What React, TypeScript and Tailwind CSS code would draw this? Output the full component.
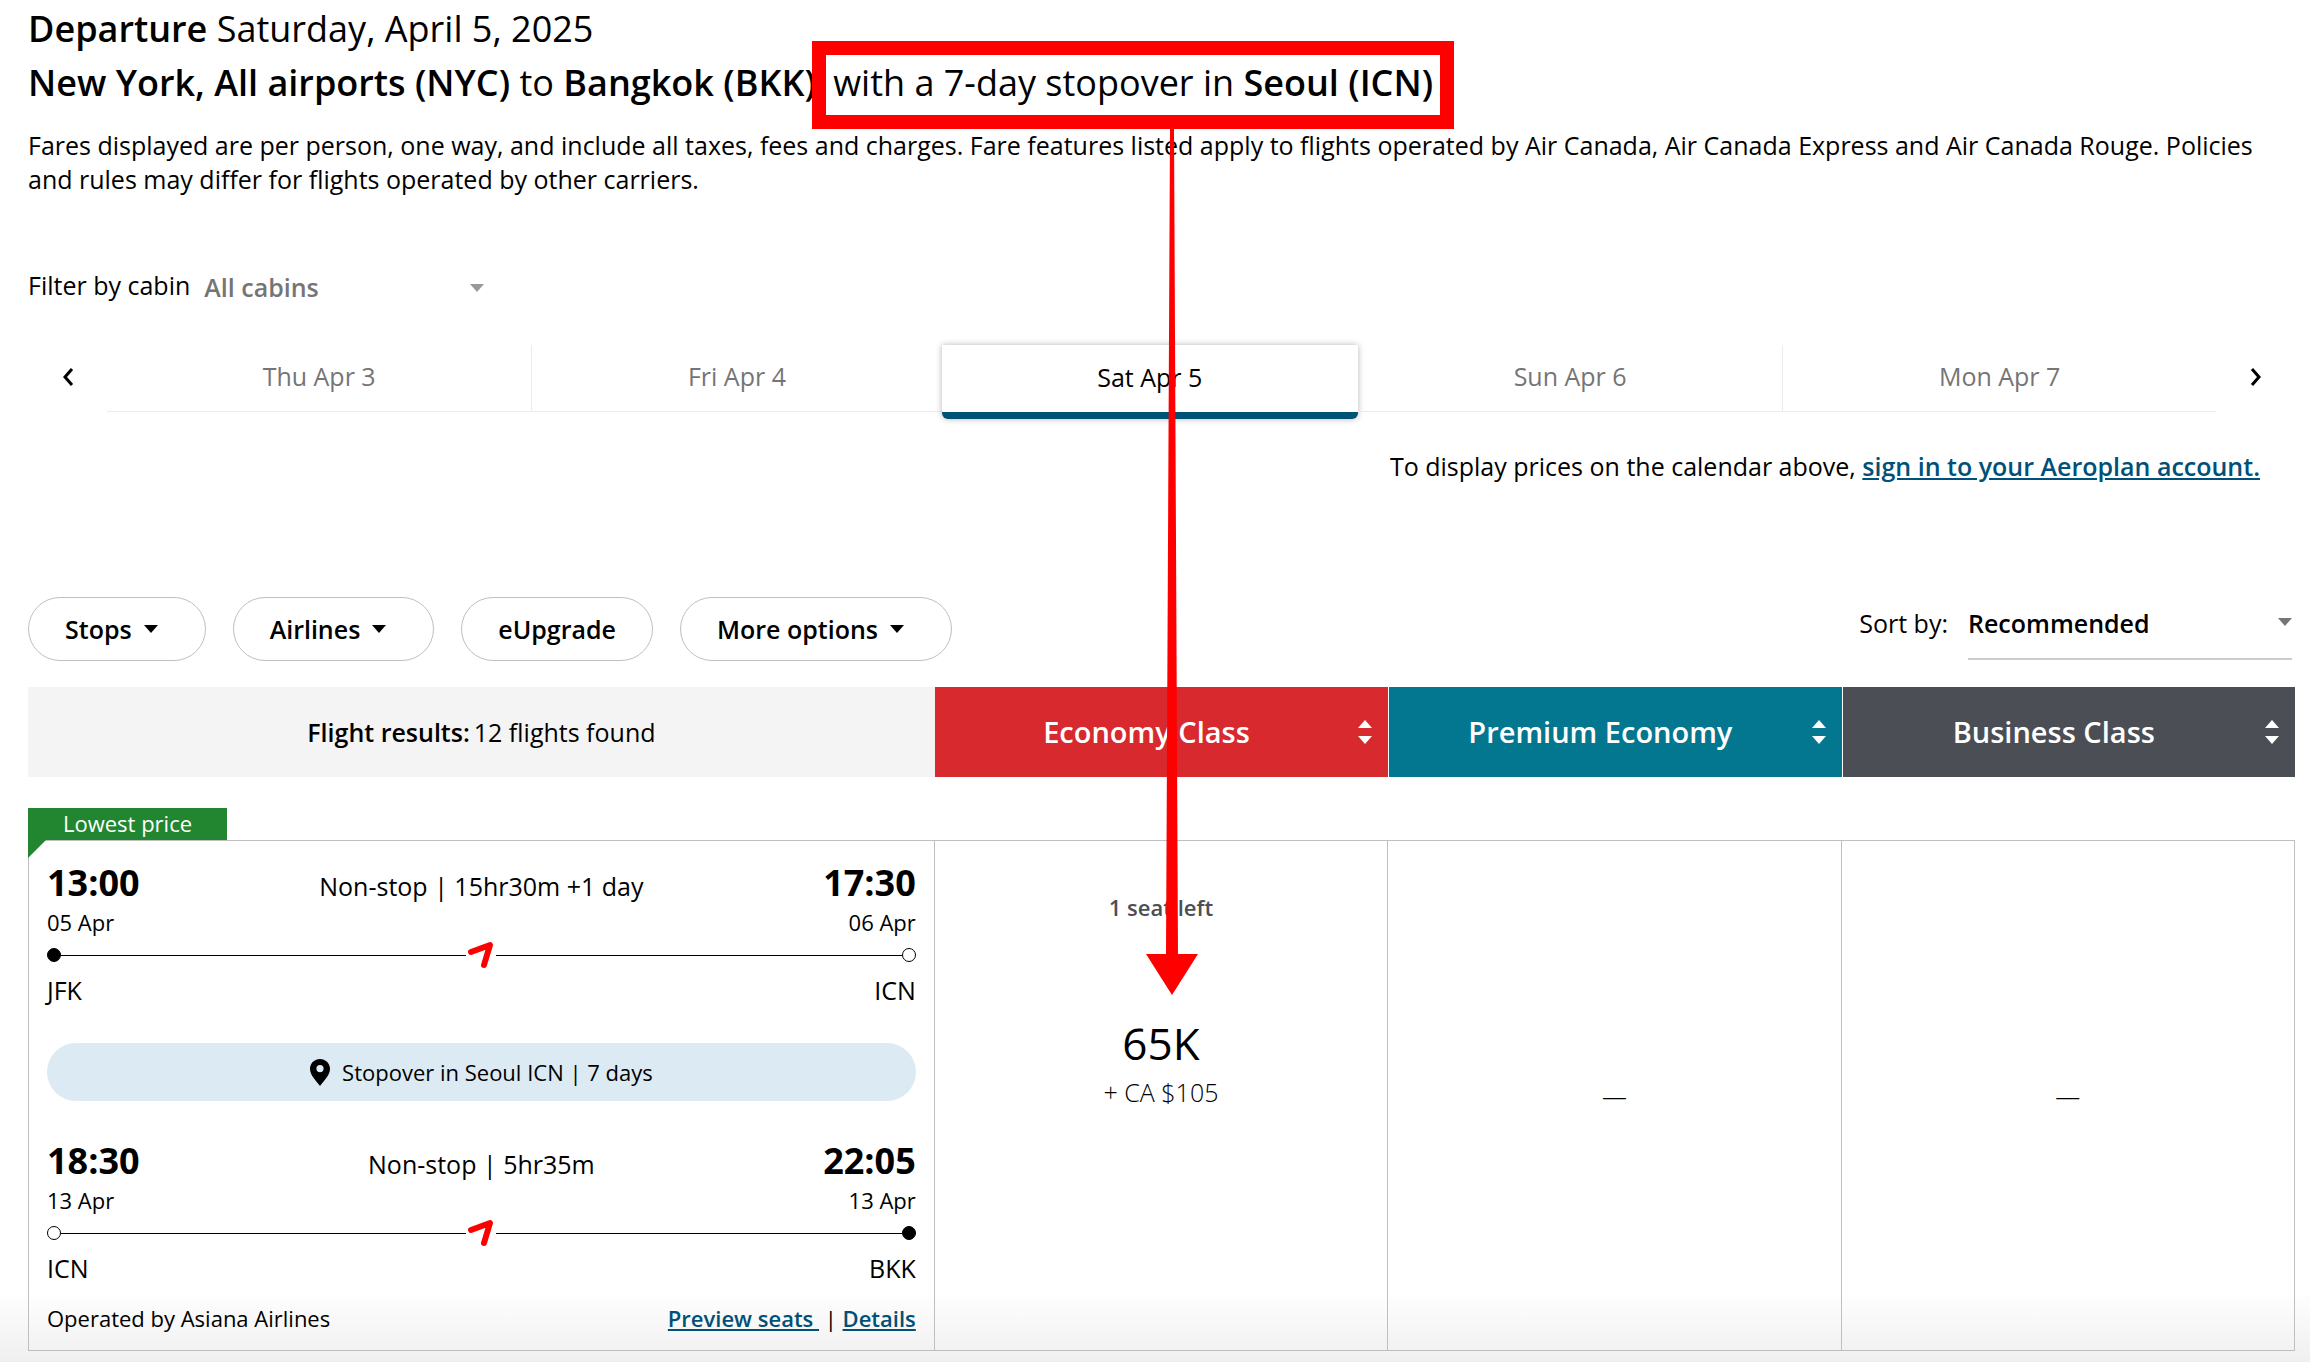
import { useState } from 'react';
import { clsx } from 'clsx';

interface Leg {
    departTime: string;
    departDate: string;
    from: string;
    arriveTime: string;
    arriveDate: string;
    to: string;
    summary: string;
}

interface CabinColumn {
    name: string;
    headerClass: string;
}

const days = ['Thu Apr 3', 'Fri Apr 4', 'Sat Apr 5', 'Sun Apr 6', 'Mon Apr 7'];

const filters = [
    { label: 'Stops', menu: true },
    { label: 'Airlines', menu: true },
    { label: 'eUpgrade', menu: false },
    { label: 'More options', menu: true },
];

const cabins: CabinColumn[] = [
    { name: 'Economy Class', headerClass: 'bg-[#d8292f]' },
    { name: 'Premium Economy', headerClass: 'bg-[#03778f]' },
    { name: 'Business Class', headerClass: 'bg-[#4b4f55]' },
];

const legs: Leg[] = [
    {
        departTime: '13:00',
        departDate: '05 Apr',
        from: 'JFK',
        arriveTime: '17:30',
        arriveDate: '06 Apr',
        to: 'ICN',
        summary: 'Non-stop | 15hr30m +1 day',
    },
    {
        departTime: '18:30',
        departDate: '13 Apr',
        from: 'ICN',
        arriveTime: '22:05',
        arriveDate: '13 Apr',
        to: 'BKK',
        summary: 'Non-stop | 5hr35m',
    },
];

const Caret = ({ className }: { className?: string }) => (
    <svg viewBox="0 0 14 8" className={clsx('h-2 w-3.5 fill-current', className)} aria-hidden="true">
        <path d="M0 0h14L7 8z" />
    </svg>
);

const SortArrows = () => (
    <svg viewBox="0 0 14 24" className="h-6 w-3.5 fill-white" aria-hidden="true">
        <path d="M7 0l7 8H0zM0 16h14l-7 8z" />
    </svg>
);

const Chevron = ({ flip }: { flip?: boolean }) => (
    <svg
        viewBox="0 0 12 18"
        className={clsx('h-[18px] w-3 fill-none stroke-black stroke-3', flip && 'rotate-180')}
        aria-hidden="true"
    >
        <path d="M10 1L3 9l7 8" />
    </svg>
);

const Dot = ({ filled }: { filled: boolean }) => (
    <span className={clsx('size-3.5 rounded-full border border-black', filled && 'bg-black')} />
);

const FlightLeg = ({ leg, startFilled, endFilled }: { leg: Leg; startFilled: boolean; endFilled: boolean }) => (
    <div>
        <div className="flex items-baseline justify-between text-[36px] leading-[48px]">
            <span className="font-bold">{leg.departTime}</span>
            <span className="text-[25px] leading-[34px]">{leg.summary}</span>
            <span className="font-bold">{leg.arriveTime}</span>
        </div>
        <div className="flex justify-between text-[22px] leading-[30px]">
            <span>{leg.departDate}</span>
            <span>{leg.arriveDate}</span>
        </div>
        <div className="my-[11px] flex h-3.5 items-center">
            <Dot filled={startFilled} />
            <span className="h-px flex-1 bg-black" />
            <svg viewBox="0 0 30 28" className="-my-2 h-7 w-[30px] fill-none stroke-[#ff0000]" aria-hidden="true">
                <path d="M5 11L24 4L18 24" strokeWidth="6" strokeLinecap="round" strokeLinejoin="round" />
            </svg>
            <span className="h-px flex-1 bg-black" />
            <Dot filled={endFilled} />
        </div>
        <div className="flex justify-between text-[25px] leading-[34px]">
            <span>{leg.from}</span>
            <span>{leg.to}</span>
        </div>
    </div>
);

const App = () => {
    const [selectedDay, setSelectedDay] = useState('Sat Apr 5');

    return (
        <main className="min-h-screen bg-[linear-gradient(to_top,#efefef,#ffffff_72px)] pt-0.5 pr-[15px] pb-3 pl-7 font-['Open_Sans',sans-serif] text-[25px] leading-[34px] text-black">
            <h1 className="text-[36px] leading-[54px]">
                <strong className="font-semibold">Departure</strong> Saturday, April 5, 2025
                <br />
                <strong className="font-semibold">New York, All airports (NYC)</strong> to{' '}
                <strong className="font-semibold">Bangkok (BKK)</strong>{' '}
                {/* callout round the stopover, with its arrow down to the price */}
                <span className="relative ml-2 inline-block">
                    with a 7-day stopover in <strong className="font-semibold">Seoul (ICN)</strong>
                    <span className="absolute -inset-x-[21px] -top-[15px] h-[88px] border-[14px] border-[#ff0000]" />
                    <svg
                        viewBox="0 0 52 866"
                        className="absolute top-[73px] left-[313px] z-10 h-[866px] w-[52px] fill-[#ff0000]"
                        aria-hidden="true"
                    >
                        <path d="M24 0h4l4 825h20L26 866L0 825h20z" />
                    </svg>
                </span>
            </h1>
            <p className="mt-[18px]">
                Fares displayed are per person, one way, and include all taxes, fees and charges. Fare features listed
                apply to flights operated by Air Canada, Air Canada Express and Air Canada Rouge. Policies and rules may
                differ for flights operated by other carriers.
            </p>

            <div className="mt-[72px] flex items-start gap-3.5">
                <label htmlFor="cabin">Filter by cabin</label>
                <div className="relative w-[284px] pt-0.5 text-[#757575]">
                    <select id="cabin" className="block w-full appearance-none bg-transparent font-semibold">
                        <option>All cabins</option>
                        <option>Economy Class</option>
                        <option>Premium Economy</option>
                        <option>Business Class</option>
                    </select>
                    <Caret className="pointer-events-none absolute top-4 right-1 text-[#999999]" />
                </div>
            </div>

            <div className="mt-[41px] flex items-start">
                <button aria-label="Previous days" className="flex h-16 w-[79px] items-center justify-center">
                    <Chevron />
                </button>
                <div className="flex flex-1 items-start">
                    {days.map((day, index) => (
                        <button
                            key={day}
                            onClick={() => setSelectedDay(day)}
                            className={clsx(
                                'flex-auto pb-1',
                                day === selectedDay
                                    ? 'h-[74px] rounded-b-md border-b-[7px] border-[#005274] bg-white shadow-[0_0_6px_rgba(0,0,0,0.3)]'
                                    : 'h-[67px] border-b border-[#ebebeb] text-[#757575]',
                                (index === 0 || index === 3) && 'border-r',
                            )}
                        >
                            {day}
                        </button>
                    ))}
                </div>
                <button aria-label="Next days" className="flex h-16 w-[79px] items-center justify-center">
                    <Chevron flip />
                </button>
            </div>

            <p className="mt-[30px] mr-[35px] text-right">
                To display prices on the calendar above,{' '}
                <a href="#sign-in" className="font-semibold text-[#005078] underline">
                    sign in to your Aeroplan account.
                </a>
            </p>

            <div className="mt-[114px] flex items-start justify-between">
                <div className="flex gap-[27px]">
                    {filters.map((filter) => (
                        <button
                            key={filter.label}
                            className="flex h-16 items-center gap-3 rounded-full border border-[#bfbfbf] px-9 font-semibold"
                        >
                            {filter.label}
                            {filter.menu && <Caret className="mr-[11px]" />}
                        </button>
                    ))}
                </div>
                <div className="mr-[3px] flex items-start gap-5 pt-[9px]">
                    <label htmlFor="sort">Sort by:</label>
                    <div className="relative w-[324px] border-b-2 border-[#cccccc] pb-[18px]">
                        <select id="sort" className="block w-full appearance-none bg-transparent font-semibold">
                            <option>Recommended</option>
                            <option>Departure time</option>
                            <option>Duration</option>
                        </select>
                        <Caret className="pointer-events-none absolute top-3 right-0 text-[#757575]" />
                    </div>
                </div>
            </div>

            <table className="mt-[26px] w-full table-fixed border-separate border-spacing-0">
                <colgroup>
                    <col className="w-2/5" />
                    <col className="w-1/5" />
                    <col className="w-1/5" />
                    <col className="w-1/5" />
                </colgroup>
                <thead>
                    <tr className="h-[90px]">
                        <th scope="col" className="bg-[#f4f4f4] p-0 text-center font-normal">
                            <span className="mr-1 font-semibold">Flight results:</span>12 flights found
                        </th>
                        {cabins.map((cabin, index) => (
                            <th
                                key={cabin.name}
                                scope="col"
                                className={clsx('border-white p-0', index > 0 && 'border-l', cabin.headerClass)}
                            >
                                <button className="flex w-full items-center pr-4 text-[29px] leading-10 font-semibold text-white">
                                    <span className="flex-1">{cabin.name}</span>
                                    <SortArrows />
                                </button>
                            </th>
                        ))}
                    </tr>
                </thead>
                <tbody>
                    <tr className="h-[63px]" aria-hidden="true">
                        <td colSpan={4} />
                    </tr>
                    <tr>
                        <td className="relative border border-[#bfbfbf] px-[18px] pt-[18px] pb-[17px] align-top">
                            <span className="absolute -top-[33px] -left-px h-8 bg-[#21862f] px-[35px] text-[22px] leading-[30px] text-white">
                                Lowest price
                            </span>
                            <svg viewBox="0 0 18 18" className="absolute -top-px -left-px size-[18px] fill-[#21862f]" aria-hidden="true">
                                <path d="M0 0h18L0 18z" />
                            </svg>
                            <FlightLeg leg={legs[0]} startFilled endFilled={false} />
                            <div className="my-9 flex h-[58px] items-center justify-center gap-3 rounded-full bg-[#dceaf3] text-[22px]">
                                <svg viewBox="0 0 20 27" className="h-[27px] w-5" aria-hidden="true">
                                    <path
                                        fillRule="evenodd"
                                        d="M10 0C4.500 0 0 4.300 0 9.700C0 16 5.500 21 10 27c4.500-6 10-11 10-17.300C20 4.300 15.500 0 10 0zm0 6a3.600 3.600 0 1 1 0 7.200A3.600 3.600 0 0 1 10 6z"
                                    />
                                </svg>
                                Stopover in Seoul ICN | 7 days
                            </div>
                            <FlightLeg leg={legs[1]} startFilled={false} endFilled />
                            <div className="mt-[18px] flex justify-between text-[22px] leading-[30px]">
                                <span>Operated by Asiana Airlines</span>
                                <span className="whitespace-pre">
                                    <a href="#seats" className="font-semibold text-[#005078] underline">{'Preview seats '}</a>
                                    {' | '}
                                    <a href="#details" className="font-semibold text-[#005078] underline">Details</a>
                                </span>
                            </div>
                        </td>
                        <td className="border-y border-r border-[#bfbfbf] p-0 pt-[51px] text-center align-top">
                            <p className="text-[22px] leading-[30px] font-semibold text-[#4b4f55]">1 seat left</p>
                            <p className="mt-[91px] text-[44px] leading-[60px]">65K</p>
                            <p className="leading-[38px] font-light">+ CA $105</p>
                        </td>
                        <td className="border-y border-r border-[#bfbfbf] p-0 text-center align-middle font-light">—</td>
                        <td className="border-y border-r border-[#bfbfbf] p-0 text-center align-middle font-light">—</td>
                    </tr>
                </tbody>
            </table>
        </main>
    );
};

export default App;
